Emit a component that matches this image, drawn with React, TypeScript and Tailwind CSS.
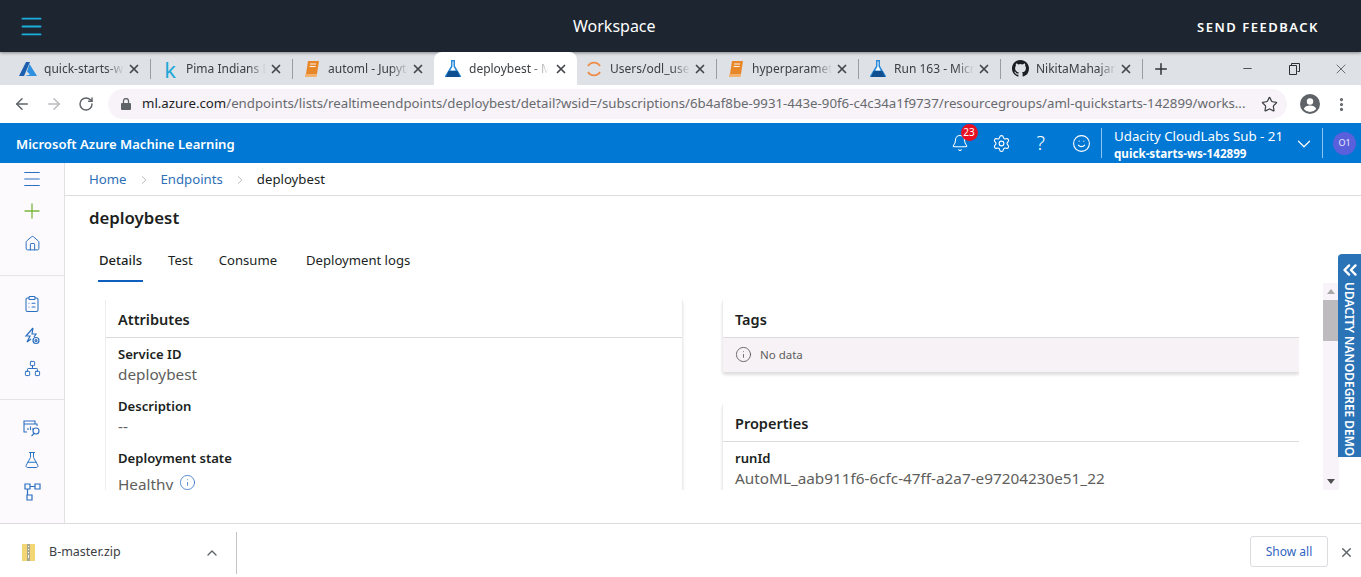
import { ArrowLeft, ArrowRight, Bell, ChevronDown, ChevronRight, ChevronUp, ChevronsLeft, ClipboardList, FlaskConical, Home, Info, Menu, Minus, MoreVertical, Network, Plus, RotateCw, Settings, Smile, Star, X } from 'lucide-react';

const font = { fontFamily: '"Noto Sans", sans-serif' };

const AzureIcon = () => (
    <svg width="18" height="16" viewBox="0 0 18 16">
        <path d="M7 1h4L5 15H0z" fill="#1b5fae" />
        <path d="M10.5 3 18 15H6l5-1.500-3-3z" fill="#2f8fe0" />
    </svg>
);

const KaggleIcon = () => <span className="w-[16px] text-center text-[22px] leading-none text-[#20a8d8]">k</span>;

const BookIcon = () => (
    <svg width="14" height="16" viewBox="0 0 14 16">
        <path d="M3 0h11l-2 13H1z" fill="#e8862a" />
        <path d="M1 13h11l-.4 3H2a1.500 1.500 0 0 1-1-3z" fill="#f4b26c" />
        <path d="M5 3h6M4.600 5.500h6" stroke="#fff" strokeWidth="0.9" />
    </svg>
);

const FlaskIcon = () => (
    <svg width="16" height="17" viewBox="0 0 16 17">
        <path d="M6 0h4v6l6 10a.7.7 0 0 1-.6 1H.6A.7.7 0 0 1 0 16L6 6z" fill="#2a8ad8" />
        <path d="M7.500 1.500h1v5l2.200 4H5.300l2.200-4z" fill="#fff" />
        <path d="M3.500 11h9l2.500 6H1z" fill="#0f4f8f" />
    </svg>
);

const SpinnerIcon = () => (
    <svg width="18" height="18" viewBox="0 0 18 18" fill="none" stroke="#ee8d4a" strokeWidth="1.800">
        <path d="M3 6a7 7 0 0 1 12 0" />
        <path d="M3 12a7 7 0 0 0 12 0" />
    </svg>
);

const GithubIcon = () => (
    <svg width="17" height="17" viewBox="0 0 16 16" fill="#1b1f23">
        <path d="M8 0C3.580 0 0 3.580 0 8c0 3.540 2.290 6.530 5.470 7.590.4.070.55-.17.55-.38 0-.19-.01-.82-.01-1.490-2.010.37-2.530-.49-2.690-.94-.09-.23-.48-.94-.82-1.130-.28-.15-.68-.52-.01-.53.63-.01 1.080.58 1.230.82.720 1.210 1.870.87 2.330.66.070-.52.280-.87.510-1.070-1.780-.2-3.640-.89-3.640-3.950 0-.87.310-1.590.820-2.150-.08-.2-.36-1.020.08-2.120 0 0 .67-.21 2.200.82a7.400 7.400 0 0 1 4 0c1.530-1.040 2.200-.82 2.200-.82.440 1.100.16 1.920.08 2.120.51.560.82 1.270.82 2.150 0 3.070-1.870 3.750-3.650 3.950.29.250.54.730.54 1.480 0 1.070-.01 1.930-.01 2.200 0 .21.150.46.550.38A8.010 8.010 0 0 0 16 8c0-4.420-3.580-8-8-8z" />
    </svg>
);

const tabs = [
    { title: 'quick-starts-ws-142899', icon: <AzureIcon /> },
    { title: 'Pima Indians Diabetes', icon: <KaggleIcon /> },
    { title: 'automl - Jupyter Notebook', icon: <BookIcon /> },
    { title: 'deploybest - Microsoft', icon: <FlaskIcon />, active: true },
    { title: 'Users/odl_user_142899', icon: <SpinnerIcon /> },
    { title: 'hyperparameter_tuning', icon: <BookIcon /> },
    { title: 'Run 163 - Microsoft', icon: <FlaskIcon /> },
    { title: 'NikitaMahajan/nd00', icon: <GithubIcon /> },
];

const Tab = ({ title, icon, active }: { title: string; icon: React.ReactNode; active?: boolean }) => (
    <div className={`flex h-[33px] shrink-0 items-center pr-[9px] ${active ? 'relative z-10 ml-px -mr-[2px] w-[143px] rounded-t-lg bg-white pl-[10px]' : 'w-[142px] pl-[11px]'}`}>
        <span className="flex w-[18px] shrink-0 justify-center">{icon}</span>
        <span className="ml-[7px] w-[80px] overflow-hidden whitespace-nowrap text-[12px] text-[#3c4043] [mask-image:linear-gradient(to_right,black_78%,transparent)]">
            {title}
        </span>
        <X size={14} strokeWidth={3} className="ml-auto text-[#45484c]" />
    </div>
);

const TabStrip = () => (
    <div className="flex h-[33px] items-center bg-[#dee1e6] pl-[8px]">
        {tabs.map((tab, i) => (
            <div key={tab.title} className="-mr-px flex items-center">
                <Tab {...tab} />
                {i !== 2 && i !== 3 && <div className="h-[20px] w-px shrink-0 bg-[#9a9da1]" />}
            </div>
        ))}
        <Plus size={18} strokeWidth={2} className="ml-[10px] text-[#2f3236]" />
        <div className="ml-auto flex items-center pr-[12px] text-[#2c2f33]">
            <Minus size={13} strokeWidth={1.500} />
            <svg width="12" height="12" viewBox="0 0 12 12" fill="none" stroke="currentColor" className="ml-[34px]">
                <path d="M3.500 2.500V.5h8v8h-2" />
                <path d="M1.500 2.500h7v9h-7z" />
            </svg>
            <X size={16} strokeWidth={1} className="ml-[33px]" />
        </div>
    </div>
);

const AddressBar = () => (
    <div className="flex h-[38px] items-center bg-white">
        <div className="flex w-[108px] shrink-0 items-center pl-[13px] text-[#5f6368]">
            <ArrowLeft size={18} strokeWidth={2} />
            <ArrowRight size={18} strokeWidth={2} className="ml-[14px] text-[#b9bbbe]" />
            <RotateCw size={16} strokeWidth={2.200} className="ml-[15px]" />
        </div>
        <div className="flex h-[30px] w-[1179px] shrink-0 items-center rounded-full bg-[#f7f3f8] pl-[13px]">
            <svg width="10" height="12" viewBox="0 0 10 12" fill="#5f6368">
                <path d="M1 5h8a1 1 0 0 1 1 1v5a1 1 0 0 1-1 1H1a1 1 0 0 1-1-1V6a1 1 0 0 1 1-1z" />
                <path d="M2.500 5V3a2.500 2.500 0 0 1 5 0v2" fill="none" stroke="#5f6368" strokeWidth="1.300" />
            </svg>
            <span className="ml-[11px] whitespace-nowrap text-[13.250px] text-[#676a6e]">
                <span className="text-[#202124]">ml.azure.com</span>/endpoints/lists/realtimeendpoints/deploybest/detail?wsid=/subscriptions/6b4af8be-9931-443e-90f6-c4c34a1f9737/resourcegroups/aml-quickstarts-142899/works...
            </span>
            <Star size={17} strokeWidth={1.700} className="ml-auto mr-[9px] text-[#3c4043]" />
        </div>
        <svg width="20" height="20" viewBox="0 0 20 20" className="ml-[13px]">
            <circle cx="10" cy="10" r="10" fill="#5f6368" />
            <circle cx="10" cy="7.500" r="3.200" fill="#fff" />
            <path d="M3.800 15c1-2.400 3.400-3.400 6.200-3.400s5.200 1 6.200 3.400a8 8 0 0 1-12.400 0z" fill="#fff" />
        </svg>
        <MoreVertical size={17} strokeWidth={2.500} className="ml-[13px] text-[#5f6368]" />
    </div>
);

const AzureHeader = () => (
    <div className="flex h-[40px] items-center bg-[#0078d4] pl-[16px] text-white">
        <span className="pt-[3px] text-[13.100px] font-semibold">Microsoft Azure Machine Learning</span>
        <div className="relative ml-auto">
            <Bell size={18} strokeWidth={1.400} />
            <span className="absolute -right-[9px] -top-[10px] flex h-[17px] w-[17px] items-center justify-center rounded-full bg-[#e81123] text-[10px] text-white">23</span>
        </div>
        <Settings size={19} strokeWidth={1.400} className="ml-[23px]" />
        <span className="ml-[26px] text-[20px] font-light leading-none">?</span>
        <Smile size={19} strokeWidth={1.400} className="ml-[27px]" />
        <div className="ml-[10px] h-[30px] w-px bg-[#8dc3ec]" />
        <div className="ml-[12px] w-[173px] whitespace-nowrap pt-[4px] leading-none">
            <div className="text-[13.300px] leading-[17px]">Udacity CloudLabs Sub - 21</div>
            <div className="text-[11.650px] font-bold leading-[17px]">quick-starts-ws-142899</div>
        </div>
        <ChevronDown size={22} strokeWidth={1.300} className="ml-[6px] mt-[2px]" />
        <div className="ml-[7px] h-[30px] w-px bg-[#8dc3ec]" />
        <div className="ml-[10px] mr-[5px] flex h-[23px] w-[23px] items-center justify-center rounded-full bg-[#5a5fdc] text-[9px] text-[#e8e8ff]">O1</div>
    </div>
);

const PipeIcon = () => (
    <svg width="17" height="18" viewBox="0 0 17 18" fill="none" stroke="currentColor" strokeWidth="1.200">
        <path d="M1 1h5v5H1zM11 1h5v5h-5zM3 12h5v5H3z" />
        <path d="M6 3.500h5M3.500 6v6" />
    </svg>
);

const MonitorIcon = () => (
    <svg width="18" height="17" viewBox="0 0 18 17" fill="none" stroke="currentColor" strokeWidth="1.100">
        <path d="M1 1h11v3H1zM1 4v8h3M3 4h11v2" />
        <path d="M5 10v-2M7.500 10V6.500M10 10V8" />
        <circle cx="13" cy="11" r="3" />
        <path d="m11 13.500-2.500 2.500" />
    </svg>
);

const BoltIcon = () => (
    <svg width="17" height="18" viewBox="0 0 17 18" fill="none" stroke="currentColor" strokeWidth="1.200">
        <path d="M9 1 2 9h4l-3 6 4-3M9 1 8 7h4l-2 3" />
        <circle cx="12" cy="13.500" r="3" />
        <circle cx="12" cy="13.500" r="1" />
    </svg>
);

const SideItem = ({ children }: { children: React.ReactNode }) => (
    <div className="flex h-[32px] items-center justify-center text-[#2a6fc0]">{children}</div>
);

const Sidebar = () => (
    <div className="w-[65px] shrink-0 border-r border-[#e2e0e2] bg-[#fcfafc]">
        <div className="border-b border-[#e6e4e6] pb-[16px]">
            <SideItem><Menu size={22} strokeWidth={1.100} /></SideItem>
            <SideItem><Plus size={24} strokeWidth={1.300} className="text-[#7db53c]" /></SideItem>
            <SideItem><Home size={17} strokeWidth={1.400} /></SideItem>
        </div>
        <div className="border-b border-[#e6e4e6] pb-[15px] pt-[12px]">
            <SideItem><ClipboardList size={18} strokeWidth={1.400} /></SideItem>
            <SideItem><BoltIcon /></SideItem>
            <SideItem><Network size={17} strokeWidth={1.400} /></SideItem>
        </div>
        <div className="pt-[12px]">
            <SideItem><MonitorIcon /></SideItem>
            <SideItem><FlaskConical size={18} strokeWidth={1.300} /></SideItem>
            <SideItem><PipeIcon /></SideItem>
        </div>
    </div>
);

const Field = ({ label, value, info }: { label: string; value: string; info?: boolean }) => (
    <div className="h-[52px]">
        <div className="text-[13.100px] font-semibold leading-[20px] text-[#201f1e]">{label}</div>
        <div className={`flex items-center text-[15.300px] leading-[20px] text-[#605e5c] ${info ? 'pt-[6px]' : ''}`}>
            {value}
            {info && <Info size={17} strokeWidth={1.100} className="ml-[6px] -translate-y-[2px] text-[#2a6fc0]" />}
        </div>
    </div>
);

const Card = ({ title, children }: { title: string; children: React.ReactNode }) => (
    <div className="rounded-b-sm border-x border-[#eeeced] bg-white shadow-[0_3px_3px_rgba(0,0,0,0.13)]">
        <div className="border-b border-[#dcdadc] px-[12px] pb-[7px] pt-[8px] text-[14.500px] font-semibold leading-[22px] text-[#201f1e]">{title}</div>
        {children}
    </div>
);

const Content = () => (
    <div className="relative flex min-w-0 flex-1 flex-col">
        <div className="flex h-[33px] shrink-0 items-center border-b border-[#dedcde] pl-[24px] pt-[2px] text-[13.200px]">
            <span className="text-[#2f6fb7]">Home</span>
            <ChevronRight size={14} strokeWidth={1} className="mx-[10px] text-[#8a8886]" />
            <span className="text-[#2f6fb7]">Endpoints</span>
            <ChevronRight size={14} strokeWidth={1} className="mx-[10px] text-[#8a8886]" />
            <span className="text-[#201f1e]">deploybest</span>
        </div>
        <div className="pl-[24px] pt-[9px] text-[16.800px] font-semibold leading-[26px] text-[#201f1e]">deploybest</div>
        <div className="flex h-[52px] items-start gap-[26px] pl-[34px] pt-[20px] text-[13.100px] leading-[18px] text-[#201f1e]">
            <span className="relative font-medium">
                Details
                <span className="absolute -bottom-[13px] -left-[1px] -right-[1px] h-[2px] bg-[#0f5fc0]" />
            </span>
            <span>Test</span>
            <span>Consume</span>
            <span className="ml-[3px]">Deployment logs</span>
        </div>
        <div className="flex h-[207px] overflow-hidden pl-[40px] pt-[17px]">
            <div className="flex w-[1194px] shrink-0 items-start gap-[39px] overflow-hidden pb-[6px]">
                <div className="w-[578px] shrink-0">
                    <Card title="Attributes">
                        <div className="px-[12px] pt-[6px]">
                            <Field label="Service ID" value="deploybest" />
                            <Field label="Description" value="--" />
                            <Field label="Deployment state" value="Healthy" info />
                        </div>
                    </Card>
                </div>
                <div className="w-[578px] shrink-0">
                    <Card title="Tags">
                        <div className="flex h-[34px] items-center bg-[#f6f2f6] pb-[1px] pl-[12px] text-[11.500px] text-[#605e5c]">
                            <Info size={17} strokeWidth={1} className="mr-[8px] text-[#3b3a39]" />
                            No data
                        </div>
                    </Card>
                    <div className="mt-[32px]">
                        <Card title="Properties">
                            <div className="px-[12px] pt-[6px]">
                                <Field label="runId" value="AutoML_aab911f6-6cfc-47ff-a2a7-e97204230e51_22" />
                            </div>
                        </Card>
                    </div>
                </div>
            </div>
            <div className="-mt-[17px] ml-[24px] flex h-[207px] w-[16px] shrink-0 flex-col items-center bg-[#f7f3f8]">
                <div className="mt-[6px] h-0 w-0 border-x-[4px] border-b-[5px] border-x-transparent border-b-[#a8a8a8]" />
                <div className="mt-[6px] h-[41px] w-full bg-[#bdbbbd]" />
                <div className="mb-[6px] mt-auto h-0 w-0 border-x-[4px] border-t-[5px] border-x-transparent border-t-[#505050]" />
            </div>
        </div>
        <div className="absolute right-0 top-[91px] flex h-[203px] w-[23px] flex-col items-center rounded-tl-sm bg-[#2b73b7] text-white">
            <ChevronsLeft size={22} strokeWidth={2.600} className="mt-[5px] shrink-0" />
            <span className="mt-[1px] whitespace-nowrap text-[11.900px] font-semibold leading-[23px] [writing-mode:vertical-rl]">UDACITY NANODEGREE DEMO</span>
        </div>
    </div>
);

const DownloadShelf = () => (
    <div className="flex h-[54px] items-center border-t border-[#dcdcdc] bg-white pt-[4px]">
        <div className="flex h-[42px] w-[237px] shrink-0 items-center border-r border-[#c4c4c4] pl-[22px]">
            <svg width="13" height="17" viewBox="0 0 13 17">
                <path d="M0 0h13v17H0z" fill="#f2d675" />
                <path d="M5 0h3v17H5z" fill="#a8a68f" />
                <path d="M6 2h1v1H6zM6 5h1v1H6zM6 8h1v1H6zM6 11h1v3H6z" fill="#fff" />
            </svg>
            <span className="ml-[14px] text-[12.500px] text-[#3c4043]">B-master.zip</span>
            <ChevronUp size={16} strokeWidth={2} className="ml-auto mr-[16px] text-[#5f6368]" />
        </div>
        <div className="-mt-[2px] ml-auto flex h-[31px] w-[78px] items-center justify-center rounded-[3px] border border-[#dadce0] text-[12px] text-[#2f63c0]">Show all</div>
        <X size={15} strokeWidth={2.200} className="ml-[11px] mr-[7px] text-[#5f6368]" />
    </div>
);

export default function App() {
    return (
        <div className="flex h-[577px] w-[1361px] flex-col overflow-hidden bg-white" style={font}>
            <div className="relative flex h-[52px] shrink-0 items-center bg-[#1d2630] pl-[18px] pr-[42px] text-white shadow-[0_1px_3px_rgba(0,0,0,0.4)]">
                <Menu size={27} strokeWidth={1.700} className="text-[#1aaedd]" />
                <span className="ml-[528px] text-[16px] leading-none">Workspace</span>
                <span className="ml-auto pt-[3px] text-[13px] font-semibold tracking-[1.500px]">SEND FEEDBACK</span>
            </div>
            <TabStrip />
            <AddressBar />
            <AzureHeader />
            <div className="flex h-[360px] shrink-0">
                <Sidebar />
                <Content />
            </div>
            <DownloadShelf />
        </div>
    );
}
